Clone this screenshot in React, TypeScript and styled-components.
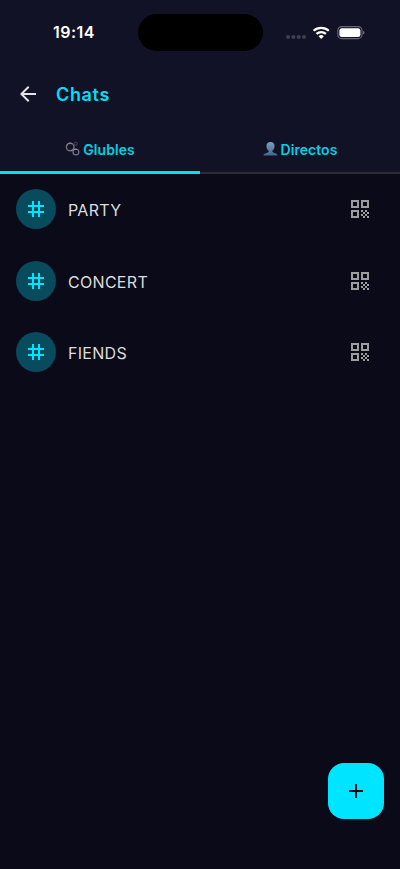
import React from "react";
import styled, { createGlobalStyle } from "styled-components";
import { MdAdd, MdArrowBack, MdQrCode, MdTag } from "react-icons/md";

const GlobalStyle = createGlobalStyle`
  * { box-sizing: border-box; }
  body { margin: 0; background: #0a0a18; font-family: Inter, "Liberation Sans", sans-serif; }
`;

const Screen = styled.div`
  position: relative;
  display: flex;
  flex-direction: column;
  width: 400px;
  height: 869px;
  background: #0a0a18;
  overflow: hidden;
`;

const Header = styled.header`
  background: #121226;
`;

const StatusBar = styled.div`
  display: grid;
  grid-template-columns: 137.5px 125px 137.5px;
  height: 65px;
  padding-top: 14px;
`;

const Clock = styled.time`
  padding-left: 53px;
  font-size: 16px;
  font-weight: 600;
  line-height: 37px;
  letter-spacing: 0.45px;
  color: #fff;
`;

const Island = styled.div`
  height: 36.5px;
  border-radius: 19px;
  background: #000;
`;

const StatusIcons = styled.div`
  padding: 10px 0 0 23.5px;

  svg { display: block; }
`;

const AppBar = styled.div`
  display: flex;
  align-items: center;
  gap: 16px;
  height: 57px;
  padding-left: 16px;
`;

const BackButton = styled.button`
  display: flex;
  padding: 0;
  border: 0;
  background: none;
  color: #e4e4e6;
`;

const Title = styled.h1`
  margin: 2px 0 0;
  font-size: 18px;
  font-weight: 600;
  line-height: 24px;
  letter-spacing: 0.65px;
  color: #00dff5;
`;

const Tabs = styled.nav`
  display: grid;
  grid-template-columns: 1fr 1fr;
  height: 51.5px;
  box-shadow: inset 0 -2px #2b2b38;
`;

const Tab = styled.button<{ $active?: boolean }>`
  display: flex;
  align-items: center;
  justify-content: center;
  gap: 3px;
  height: 51.5px;
  padding: 6px 0 0;
  border: 0;
  border-bottom: 3px solid ${(p) => (p.$active ? "#00e0f5" : "transparent")};
  background: none;
  font-family: inherit;
  font-size: 14px;
  font-weight: 600;
  letter-spacing: 0.05px;
  color: #00d0e4;

  svg { display: block; }
`;

const ChannelList = styled.main`
  display: flex;
  flex-direction: column;
  gap: 31.5px;
  padding: 15.5px 28px 0 16px;
`;

const Channel = styled.div`
  display: flex;
  align-items: center;
  height: 40px;
`;

const Avatar = styled.span`
  display: grid;
  place-items: center;
  width: 40px;
  height: 40px;
  margin-right: 12px;
  border-radius: 50%;
  background: #074b5d;
  color: #00e5ff;
`;

const ChannelName = styled.span`
  flex: 1;
  padding-top: 2px;
  font-size: 16px;
  line-height: 22px;
  letter-spacing: 0.3px;
  color: #dcdcdf;
`;

const QrButton = styled.button`
  display: flex;
  padding: 0;
  border: 0;
  background: none;
  color: #9d9d9f;
`;

const AddButton = styled.button`
  position: absolute;
  right: 16px;
  bottom: 50px;
  display: grid;
  place-items: center;
  width: 56px;
  height: 56px;
  padding: 0;
  border: 0;
  border-radius: 16px;
  background: #00e5ff;
  color: #0a0a18;
`;

const StatusGlyphs = () => (
  <svg width="80" height="18" viewBox="0 0 80 18">
    <g fill="#42424f">
      <rect x="0.3" y="11.2" width="3.6" height="3.6" rx="1.1" />
      <rect x="5.6" y="11.2" width="3.6" height="3.6" rx="1.1" />
      <rect x="10.9" y="11.2" width="3.6" height="3.6" rx="1.1" />
      <rect x="16.2" y="11.2" width="3.6" height="3.6" rx="1.1" />
    </g>
    <g fill="none" stroke="#fff" strokeWidth="2.2">
      <path d="M27.6 6.8a11.1 11.1 0 0 1 15.2 0" />
      <path d="M30.5 9.9a6.9 6.9 0 0 1 9.4 0" />
    </g>
    <path d="M32.6 12.2a3.7 3.7 0 0 1 5.2 0L35.2 15z" fill="#fff" />
    <rect x="51.8" y="2.6" width="24.2" height="12" rx="3.9" fill="none" stroke="#686875" strokeWidth="1.1" />
    <rect x="53.4" y="4.2" width="21" height="8.8" rx="2.5" fill="#fff" />
    <path d="M77.2 6.7c1.8.6 1.8 3.2 0 3.8z" fill="#777783" />
  </svg>
);

const BubblesIcon = () => (
  <svg width="15" height="16" viewBox="0 0 15 16" fill="none">
    <circle cx="5.2" cy="6" r="3.8" stroke="#69697c" strokeWidth="1.5" />
    <path d="M1.8 4.7a3.8 3.8 0 0 1 5-2.1M8.7 7.5a3.8 3.8 0 0 1-3 2.3" stroke="#aa858f" strokeWidth="1" />
    <circle cx="10.9" cy="11" r="2.9" stroke="#65748a" strokeWidth="1.3" />
    <path d="M8.4 9.6a2.9 2.9 0 0 1 3.5-1.3" stroke="#aa858f" />
    <circle cx="10.7" cy="2.7" r="1.6" stroke="#464b62" strokeWidth="1" />
  </svg>
);

const PersonIcon = () => (
  <svg width="15" height="16" viewBox="0 0 15 16">
    <defs>
      <linearGradient id="person" x1="0" y1="0" x2="0" y2="1">
        <stop offset="0" stopColor="#78a0c0" />
        <stop offset="1" stopColor="#44668e" />
      </linearGradient>
    </defs>
    <path d="M7.5 1C4.7 1 3.3 2.7 3.5 5.4c.1 2 .9 3.5 2.1 4.4v1.2c-.5 1-4.9 1-5.2 3.6h14.2c-.3-2.6-4.7-2.6-5.2-3.6V9.8c1.2-.9 2-2.4 2.1-4.4C11.7 2.7 10.3 1 7.5 1z" fill="url(#person)" />
  </svg>
);

const channels = ["PARTY", "CONCERT", "FIENDS"];

export default function App() {
  return (
    <>
      <GlobalStyle />
      <Screen>
        <Header>
          <StatusBar>
            <Clock>19:14</Clock>
            <Island />
            <StatusIcons><StatusGlyphs /></StatusIcons>
          </StatusBar>
          <AppBar>
            <BackButton aria-label="Back"><MdArrowBack size={24} /></BackButton>
            <Title>Chats</Title>
          </AppBar>
          <Tabs>
            <Tab $active><BubblesIcon />Glubles</Tab>
            <Tab><PersonIcon />Directos</Tab>
          </Tabs>
        </Header>
        <ChannelList>
          {channels.map((name) => (
            <Channel key={name}>
              <Avatar><MdTag size={24} /></Avatar>
              <ChannelName>{name}</ChannelName>
              <QrButton aria-label={`QR ${name}`}><MdQrCode size={24} /></QrButton>
            </Channel>
          ))}
        </ChannelList>
        <AddButton aria-label="Add"><MdAdd size={24} /></AddButton>
      </Screen>
    </>
  );
}
